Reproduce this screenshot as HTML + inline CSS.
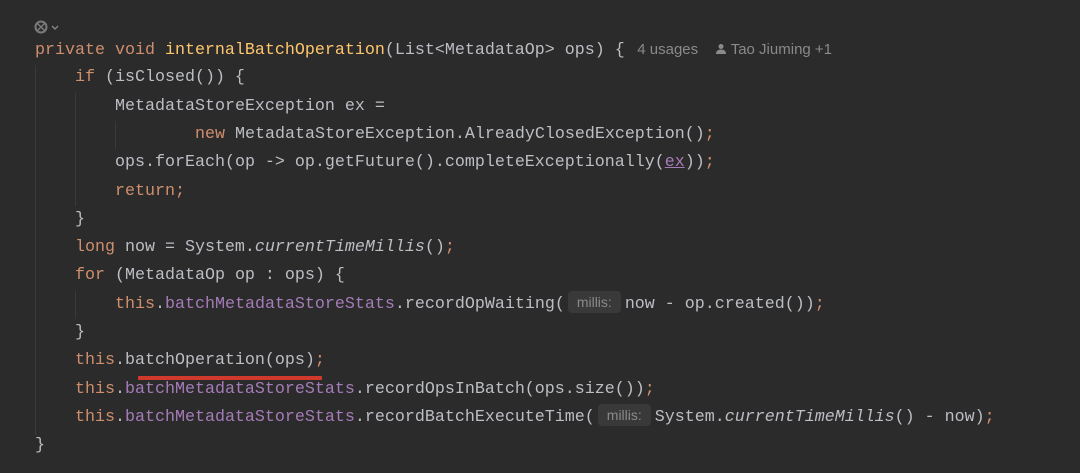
<!DOCTYPE html>
<html><head><meta charset="utf-8"><style>
html,body{margin:0;padding:0;background:#2b2b2b;width:1080px;height:473px;overflow:hidden;}
.l{position:absolute;left:0;height:28px;line-height:28px;white-space:pre;font-family:"Liberation Mono",monospace;font-size:16.67px;color:#bcbec4;}
.k{color:#cf8e6d}.m{color:#ffc66d}.f{color:#a57bb8}.i{font-style:italic}
.h{display:inline-block;width:53px;height:22px;line-height:22px;background:#393939;border-radius:4px;color:#8a8a8a;font-family:"Liberation Sans",sans-serif;font-size:14px;text-align:center;margin:0 4px 0 3px;vertical-align:middle;position:relative;top:-1px}
.g{position:absolute;width:1px;background:#3a3a3a}
.u{text-decoration:underline;text-decoration-color:#a57bb8}
</style></head><body>
<svg style="position:absolute;left:34px;top:19px" width="30" height="16" viewBox="0 0 30 16"><circle cx="7" cy="8" r="5.5" fill="none" stroke="#7a7a7a" stroke-width="2"/><path d="M3 4l8 8M11 4l-8 8" stroke="#7a7a7a" stroke-width="1.5"/><path d="M18 7l3 3 3-3" fill="none" stroke="#8a8a8a" stroke-width="1.3"/></svg>
<div class="g" style="left:35px;top:65px;height:370px"></div>
<div class="g" style="left:75px;top:93px;height:113px"></div>
<div class="g" style="left:115px;top:121px;height:28px"></div>
<div class="g" style="left:75px;top:291px;height:28px"></div>
<div class="l" style="top:36px;left:35px"><span class="k">private void </span><span class="m">internalBatchOperation</span>(List&lt;MetadataOp&gt; ops) {<span style="font-family:'Liberation Sans',sans-serif;font-size:15px;color:#8a8a8a">   4 usages    <svg width="12" height="12" viewBox="0 0 12 12" style="vertical-align:-1px"><circle cx="6" cy="3.5" r="2.5" fill="#8a8a8a"/><path d="M1 11c0-3 2-4.5 5-4.5s5 1.5 5 4.5z" fill="#8a8a8a"/></svg> Tao Jiuming +1</span></div>
<div class="l" style="top:64.3px;left:75px"><span class="k">if</span> (isClosed()) {</div>
<div class="l" style="top:92.6px;left:115px">MetadataStoreException ex =</div>
<div class="l" style="top:120.9px;left:195px"><span class="k">new</span> MetadataStoreException.AlreadyClosedException()<span class="k">;</span></div>
<div class="l" style="top:149.2px;left:115px">ops.forEach(op -&gt; op.getFuture().completeExceptionally(<span class="f u">ex</span>))<span class="k">;</span></div>
<div class="l" style="top:177.5px;left:115px"><span class="k">return;</span></div>
<div class="l" style="top:205.8px;left:75px">}</div>
<div class="l" style="top:234.1px;left:75px"><span class="k">long</span> now = System.<span class="i">currentTimeMillis</span>()<span class="k">;</span></div>
<div class="l" style="top:262.4px;left:75px"><span class="k">for</span> (MetadataOp op : ops) {</div>
<div class="l" style="top:290.7px;left:115px"><span class="k">this</span>.<span class="f">batchMetadataStoreStats</span>.recordOpWaiting(<span class="h">millis:</span>now - op.created())<span class="k">;</span></div>
<div class="l" style="top:319px;left:75px">}</div>
<div class="l" style="top:347.3px;left:75px"><span class="k">this</span>.batchOperation(ops)<span class="k">;</span></div>
<div style="position:absolute;left:138px;top:376px;width:184px;height:4px;background:#d0392b;border-radius:1px"></div>
<div class="l" style="top:375.6px;left:75px"><span class="k">this</span>.<span class="f">batchMetadataStoreStats</span>.recordOpsInBatch(ops.size())<span class="k">;</span></div>
<div class="l" style="top:403.9px;left:75px"><span class="k">this</span>.<span class="f">batchMetadataStoreStats</span>.recordBatchExecuteTime(<span class="h">millis:</span>System.<span class="i">currentTimeMillis</span>() - now)<span class="k">;</span></div>
<div class="l" style="top:432.2px;left:35px">}</div>
</body></html>
